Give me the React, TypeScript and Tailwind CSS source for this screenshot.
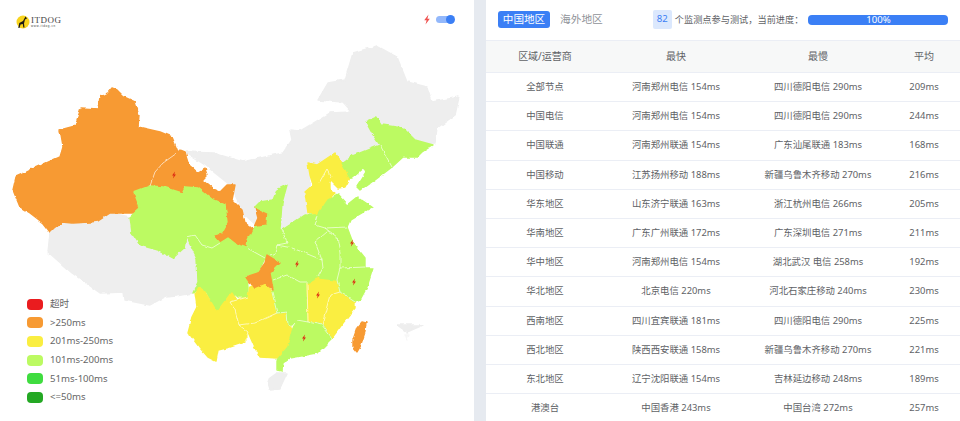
const regions: { name: string; fill: string; pts: string }[] = [
  { name: "north", fill: "#eeeeee", pts: "185,152 213,153 243,162 283,153 292,140 290,130 300,131 310,125 330,113 352,112 343,102 318,100 328,83 345,80 353,53 377,46 397,57 407,82 427,87 432,102 459,97 455,115 437,128 435,143 380,147 345,165 310,175 307,213 283,232 280,225 280,205 262,205 256,225 245,215 230,185 205,165" },
  { name: "tibet", fill: "#eeeeee", pts: "50,232 62,222 90,222 110,213 130,217 132,233 140,245 158,250 173,258 185,247 187,237 192,240 197,258 198,282 193,293 177,296 165,297 150,305 125,300 124,292 100,293 72,273 48,252" },
  { name: "hainan", fill: "#eeeeee", pts: "270,378 277,373 287,373 280,388 270,389 268,383" },
  { name: "sea", fill: "#eeeeee", pts: "397,325 423,325 407,332" },
  { name: "sea2", fill: "#f7f7f7", pts: "405,335 409,335 407,340" },
  { name: "blanket", fill: "#bcfa62", pts: "265,258 287,243 325,228 340,268 337,280 300,282 273,290" },
  { name: "xinjiang", fill: "#f79a33", pts: "112,88 117,90 124,97 135,102 139,115 138,127 160,132 172,137 178,152 177,153 163,163 155,172 150,186 134,192 140,208 135,215 138,213 110,213 98,221 90,222 72,223 62,222 54,228 50,232 43,223 30,213 20,207 13,190 16,177 25,173 35,168 60,157 63,147 60,130 75,126 81,108 98,109 100,97 108,93" },
  { name: "gansu", fill: "#f79a33", pts: "180,150 185,152 189,165 198,173 205,169 207,175 202,180 213,189 220,192 227,185 235,185 232,200 242,210 245,223 254,230 248,240 247,248 237,245 228,238 220,243 213,235 221,233 227,222 225,205 213,200 198,188 185,187 182,193 163,187 150,186 155,172 163,163 177,153" },
  { name: "ningxia", fill: "#f79a33", pts: "255,207 268,213 267,225 254,227 258,218" },
  { name: "qinghai", fill: "#bcfa62", pts: "134,192 150,186 163,187 182,193 185,187 198,188 213,200 225,205 227,222 221,233 213,235 220,243 212,248 202,245 195,235 187,237 185,247 173,258 158,250 140,245 132,233 130,217 140,208" },
  { name: "sichuan", fill: "#bcfa62", pts: "187,237 195,235 202,245 212,248 220,243 228,238 237,245 247,248 265,258 258,273 247,275 248,288 248,297 238,297 232,292 217,312 207,293 198,288 193,293 198,282 197,258" },
  { name: "shaanxi", fill: "#bcfa62", pts: "287,185 282,203 280,230 287,243 277,245 275,253 265,258 247,248 248,240 254,227 267,225 268,213 255,207 260,202 273,200 277,190" },
  { name: "yunnan", fill: "#faee41", pts: "195,293 198,288 205,292 217,312 232,292 237,300 230,302 235,310 239,325 248,332 245,342 230,347 218,350 216,361 208,357 200,348 188,332 192,317 197,307" },
  { name: "guizhou", fill: "#faee41", pts: "237,300 248,297 250,287 253,288 265,283 272,292 277,313 255,323 239,325 235,310 230,302" },
  { name: "guangxi", fill: "#faee41", pts: "239,325 255,323 277,313 287,312 288,325 293,328 288,347 278,358 260,357 255,348 248,332" },
  { name: "hunan", fill: "#bcfa62", pts: "270,273 273,280 287,275 307,283 308,322 297,320 292,325 288,325 287,312 277,313 272,292 273,290" },
  { name: "jiangxi", fill: "#faee41", pts: "307,283 320,278 337,280 340,292 330,295 322,325 308,322" },
  { name: "fujian", fill: "#faee41", pts: "340,292 355,302 355,308 343,323 332,338 322,325 330,295" },
  { name: "zhejiang", fill: "#bcfa62", pts: "340,268 373,268 367,287 360,300 355,302 340,292 337,280" },
  { name: "guangdong", fill: "#bcfa62", pts: "297,320 308,322 322,325 332,338 317,353 290,358 283,363 282,371 277,370 277,360 288,347 293,328" },
  { name: "taiwan", fill: "#f79a33", pts: "362,322 366,323 365,332 360,347 357,352 353,347 353,340 357,328" },
  { name: "hebei", fill: "#faee41", pts: "308,163 317,165 335,153 342,163 350,178 345,187 338,188 330,180 330,190 335,193 328,200 318,215 308,213 305,192 313,185 310,175" },
  { name: "liaoning", fill: "#bcfa62", pts: "342,163 350,157 380,145 392,167 375,180 361,190 357,186 366,172 364,168 352,178 350,178" },
  { name: "jilin", fill: "#bcfa62", pts: "366,122 377,117 382,125 403,128 415,140 433,145 422,152 417,157 403,157 392,167 380,145 372,133" },
  { name: "shandong", fill: "#bcfa62", pts: "318,215 328,200 338,195 347,205 357,197 372,207 350,220 347,227 325,228 315,225" },
  { name: "jiangsu", fill: "#bcfa62", pts: "347,227 353,243 365,258 365,267 340,268 340,253 337,237 325,228" },
  { name: "anhui", fill: "#bcfa62", pts: "327,232 337,237 340,253 340,268 337,280 320,278 323,268 322,260 315,242" },
  { name: "henan", fill: "#bcfa62", pts: "282,230 305,215 318,215 315,225 325,228 327,232 315,242 322,260 305,253 292,248 277,245 287,243" },
  { name: "hubei", fill: "#bcfa62", pts: "277,245 292,248 305,253 322,260 323,268 318,277 308,282 300,282 287,275 275,278 268,278 279,265 270,255 275,253" },
  { name: "chongqing", fill: "#f79a33", pts: "267,255 280,263 270,273 273,290 265,283 253,288 246,277 258,273 265,263" },
];

// province lines that show inside a coloured area
const borders = [
  "177,153 163,163 155,172 150,186",
  "187,237 195,235 202,245 212,248 220,243",
  "247,248 265,258",
  "270,255 275,253 277,245 292,248 305,253 322,260",
  "282,230 287,243 277,245",
  "273,280 287,275 300,282 308,282",
  "327,232 315,242 322,260 323,268 318,277",
  "325,228 337,237 340,253 340,268",
  "318,215 315,225 325,228 347,227",
  "340,268 365,267",
  "340,268 337,280 340,292 355,302",
  "340,292 330,295 322,325",
  "292,325 297,320 308,322 322,325 332,338",
  "272,292 277,313 287,312 288,325 293,328",
  "307,283 308,322",
  "237,300 230,302 235,310 239,325",
  "239,325 255,323 277,313",
  "239,325 248,332 245,342",
  "237,300 248,297",
  "380,145 392,167",
  "319,183 327,169 332,178",
];

const markers = [
  [174, 175],
  [352, 243],
  [297, 264],
  [354, 282],
  [318, 295],
  [304, 338],
];

const legend = [
  { label: "超时", color: "bg-[#ea1c1f]" },
  { label: ">250ms", color: "bg-[#f79a33]" },
  { label: "201ms-250ms", color: "bg-[#faee41]" },
  { label: "101ms-200ms", color: "bg-[#bcfa62]" },
  { label: "51ms-100ms", color: "bg-[#3fdc3f]" },
  { label: "<=50ms", color: "bg-[#24a824]" },
];

const rows = [
  ["全部节点", "河南郑州电信 154ms", "四川德阳电信 290ms", "209ms"],
  ["中国电信", "河南郑州电信 154ms", "四川德阳电信 290ms", "244ms"],
  ["中国联通", "河南郑州联通 154ms", "广东汕尾联通 183ms", "168ms"],
  ["中国移动", "江苏扬州移动 188ms", "新疆乌鲁木齐移动 270ms", "216ms"],
  ["华东地区", "山东济宁联通 163ms", "浙江杭州电信 266ms", "205ms"],
  ["华南地区", "广东广州联通 172ms", "广东深圳电信 271ms", "211ms"],
  ["华中地区", "河南郑州电信 154ms", "湖北武汉 电信 258ms", "192ms"],
  ["华北地区", "北京电信 220ms", "河北石家庄移动 240ms", "230ms"],
  ["西南地区", "四川宜宾联通 181ms", "四川德阳电信 290ms", "225ms"],
  ["西北地区", "陕西西安联通 158ms", "新疆乌鲁木齐移动 270ms", "221ms"],
  ["东北地区", "辽宁沈阳联通 154ms", "吉林延边移动 248ms", "189ms"],
  ["港澳台", "中国香港 243ms", "中国台湾 272ms", "257ms"],
];

const Bolt = ({ x, y, size, color }: { x: number; y: number; size: number; color: string }) => (
  <path
    transform={`translate(${x} ${y}) scale(${size / 10})`}
    d="M1.5 -5 L-2.8 0.8 L-0.4 0.8 L-1.5 5 L2.8 -0.8 L0.4 -0.8 Z"
    fill={color}
  />
);

const ChinaMap = () => (
  <svg className="absolute inset-0" width="474" height="421" viewBox="0 0 474 421">
    <defs>
      <filter id="rough" x="0" y="0" width="100%" height="100%" filterUnits="userSpaceOnUse" colorInterpolationFilters="sRGB">
        <feTurbulence type="fractalNoise" baseFrequency="0.14" numOctaves="2" seed="4" result="noise" />
        <feDisplacementMap in="SourceGraphic" in2="noise" scale="3.5" xChannelSelector="R" yChannelSelector="G" result="moved" />
        <feGaussianBlur in="moved" stdDeviation="0.35" />
      </filter>
    </defs>
    <g filter="url(#rough)">
      {regions.map((r) => (
        <polygon key={r.name} points={r.pts} fill={r.fill} stroke={r.fill} strokeWidth="1.4" strokeLinejoin="round" />
      ))}
      {borders.map((pts) => (
        <polyline key={pts} points={pts} fill="none" stroke="#ffffff" strokeWidth="0.7" strokeOpacity="0.9" strokeLinejoin="round" />
      ))}
    </g>
    {markers.map(([x, y]) => (
      <Bolt key={`${x}-${y}`} x={x} y={y} size={7} color="#dd2a12" />
    ))}
  </svg>
);

const Logo = () => (
  <div className="flex items-center gap-px">
    <svg width="14" height="14" viewBox="0 0 14 14">
      <circle cx="7" cy="7" r="6.5" fill="#f8d41e" />
      <path d="M9.5 1.5 L11 3.5 L9 4.5 L8 8.5 L8.5 12.5 L7.3 12.5 L6.8 9 L4.5 9.5 L3.5 13 L2.3 13 L3.3 8 L7 6 Z" fill="#1c1a14" />
    </svg>
    <div className="flex flex-col text-[#444]">
      <span className="font-['Liberation_Serif',serif] text-[9px] leading-[9px] tracking-[0.5px]">ITDOG</span>
      <span className="font-['Liberation_Sans',sans-serif] text-[3px] leading-[3px] tracking-[0.6px]">www.itdog.cn</span>
    </div>
  </div>
);

const Legend = () => (
  <div className="absolute bottom-[18px] left-[27px] flex flex-col gap-[7.7px]">
    {legend.map((item) => (
      <div key={item.label} className="flex h-[11px] items-center gap-[7px] text-[9.6px] text-[#666666]">
        <span className={`h-[11px] w-4 rounded-sm ${item.color}`} />
        <span>{item.label}</span>
      </div>
    ))}
  </div>
);

const ResultTable = () => (
  <div className="text-center text-[#606266]">
    <div className="grid h-[33px] grid-cols-[118px_144px_140px_1fr] items-center border-y border-[#ebeef5] bg-[#f7f8f8] text-[10px]">
      <span>区域/运营商</span>
      <span>最快</span>
      <span>最慢</span>
      <span>平均</span>
    </div>
    {rows.map((row) => (
      <div key={row[0]} className="grid h-[29.2px] grid-cols-[118px_144px_140px_1fr] items-center border-b border-[#ebeef5] text-[9.4px]">
        {row.map((cell, i) => (
          <span key={i} className="whitespace-nowrap">{cell}</span>
        ))}
      </div>
    ))}
  </div>
);

export default function App() {
  return (
    <div className="flex h-[421px] w-[960px] overflow-hidden bg-white font-['Noto_Sans','Noto_Sans_CJK_SC',sans-serif]">
      <div className="relative w-[474px] shrink-0">
        <ChinaMap />
        <div className="relative flex items-start justify-between pl-4 pr-5 pt-[15px]">
          <Logo />
          <div className="-mt-[1px] flex items-center gap-[6px]">
            <svg width="6" height="11" viewBox="-3 -5.5 6 11">
              <Bolt x={0} y={0} size={10} color="#ef5350" />
            </svg>
            <div className="relative h-[7px] w-[18px] rounded-full bg-[#93b8fb]">
              <span className="absolute -right-px -top-[1px] h-[9px] w-[9px] rounded-full bg-[#3b7ff5]" />
            </div>
          </div>
        </div>
        <Legend />
      </div>
      <div className="w-3 shrink-0 bg-[#e6eaf0]" />
      <div className="min-w-0 flex-1">
        <div className="flex h-10 items-center pb-px pl-3 pr-3">
          <span className="flex h-[17px] w-[52px] shrink-0 items-center justify-center rounded-[3px] bg-[#3b7ff5] text-[10.6px] text-white">中国地区</span>
          <span className="ml-[10px] shrink-0 whitespace-nowrap text-[10.7px] text-[#8f9399]">海外地区</span>
          <span className="ml-[50px] flex h-[19px] w-[19px] shrink-0 items-center justify-center rounded-[2px] bg-[#dbe8fd] text-[9.6px] text-[#3b7ff5]">82</span>
          <span className="ml-[3px] shrink-0 whitespace-nowrap text-[9.2px] text-[#606266]">个监测点参与测试，当前进度：</span>
          <div className="ml-[5px] flex h-[10px] w-[140px] shrink-0 items-center justify-center rounded-[4px] bg-[#3b7ff5] text-[9.6px] leading-none text-white">100%</div>
        </div>
        <ResultTable />
      </div>
    </div>
  );
}
